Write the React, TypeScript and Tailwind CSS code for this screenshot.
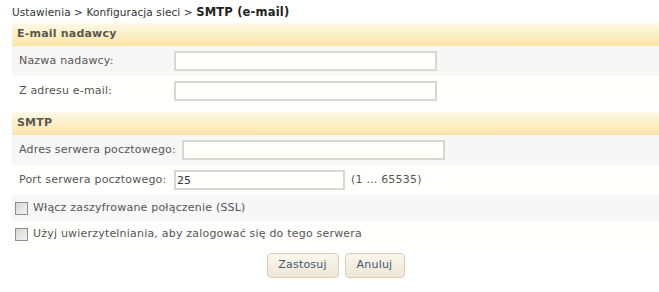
import React from 'react';

const font = { fontFamily: '"DejaVu Sans", Verdana, sans-serif' };

function SectionHeader({ title }: { title: string }) {
  return (
    <div className="h-[23px] flex items-center pl-[5px] text-[11px] font-bold tracking-[0.2px] text-[#5a5750] bg-gradient-to-b from-[#fef9ea] via-[#fdf0c6] to-[#fce6ae] border-b border-[#fbe2a2]">
      {title}
    </div>
  );
}

function TextRow({
  label,
  gray,
  value = '',
  inputWidth = 'w-[263px]',
  hint,
}: {
  label: string;
  gray?: boolean;
  value?: string;
  inputWidth?: string;
  hint?: string;
}) {
  return (
    <div className={`h-[30px] flex items-center pl-[7px] ${gray ? 'bg-[#f7f7f7]' : 'bg-[#fffffd]'}`}>
      <span className="min-w-[155px] pr-[6px] text-[11px] tracking-[0.2px] text-[#555555] whitespace-nowrap">{label}</span>
      <input
        readOnly
        value={value}
        className={`${inputWidth} h-[20px] border-2 border-[#d8d8d2] bg-[#fffffc] px-[1px] text-[11px] text-[#333] outline-none`}
        style={font}
      />
      {hint && <span className="ml-[6px] text-[11px] tracking-[0.2px] text-[#555555]">{hint}</span>}
    </div>
  );
}

function CheckRow({ label, gray }: { label: string; gray?: boolean }) {
  return (
    <div className={`h-[26px] flex items-center pl-[3px] ${gray ? 'bg-[#f7f7f7]' : 'bg-[#fffffd]'}`}>
      <span className="w-[13px] h-[13px] border border-[#8e8e8e] bg-gradient-to-br from-[#d6d6d6] to-[#f4f4f4] mr-[5px]" />
      <span className="text-[11px] tracking-[0.2px] text-[#555555]">{label}</span>
    </div>
  );
}

function Button({ label, width }: { label: string; width: string }) {
  return (
    <button
      className={`${width} h-[25px] rounded-[4px] border border-[#d8cfbb] bg-gradient-to-b from-[#faf6ec] to-[#efe7d4] text-[11px] tracking-[0.2px] text-[#3e5877]`}
      style={font}
    >
      {label}
    </button>
  );
}

export default function App() {
  return (
    <div className="w-[659px] h-[292px] bg-white pl-[12px] pt-[5px]" style={font}>
      <div className="h-[18px] text-[10.5px] tracking-[0.1px] text-[#333333] leading-[14px]">
        Ustawienia &gt; Konfiguracja sieci &gt; <span className="font-bold text-[11.5px] tracking-[0.2px] text-[#222]">SMTP (e-mail)</span>
      </div>

      <SectionHeader title="E-mail nadawcy" />
      <TextRow label="Nazwa nadawcy:" gray />
      <TextRow label="Z adresu e-mail:" />

      <div className="h-[6px]" />

      <SectionHeader title="SMTP" />
      <TextRow label="Adres serwera pocztowego:" gray />
      <TextRow label="Port serwera pocztowego:" value="25" inputWidth="w-[171px]" hint="(1 ... 65535)" />
      <CheckRow label="Włącz zaszyfrowane połączenie (SSL)" gray />
      <CheckRow label="Użyj uwierzytelniania, aby zalogować się do tego serwera" />

      <div className="flex justify-center gap-[6px] pt-[6px]">
        <Button label="Zastosuj" width="w-[72px]" />
        <Button label="Anuluj" width="w-[60px]" />
      </div>
    </div>
  );
}
